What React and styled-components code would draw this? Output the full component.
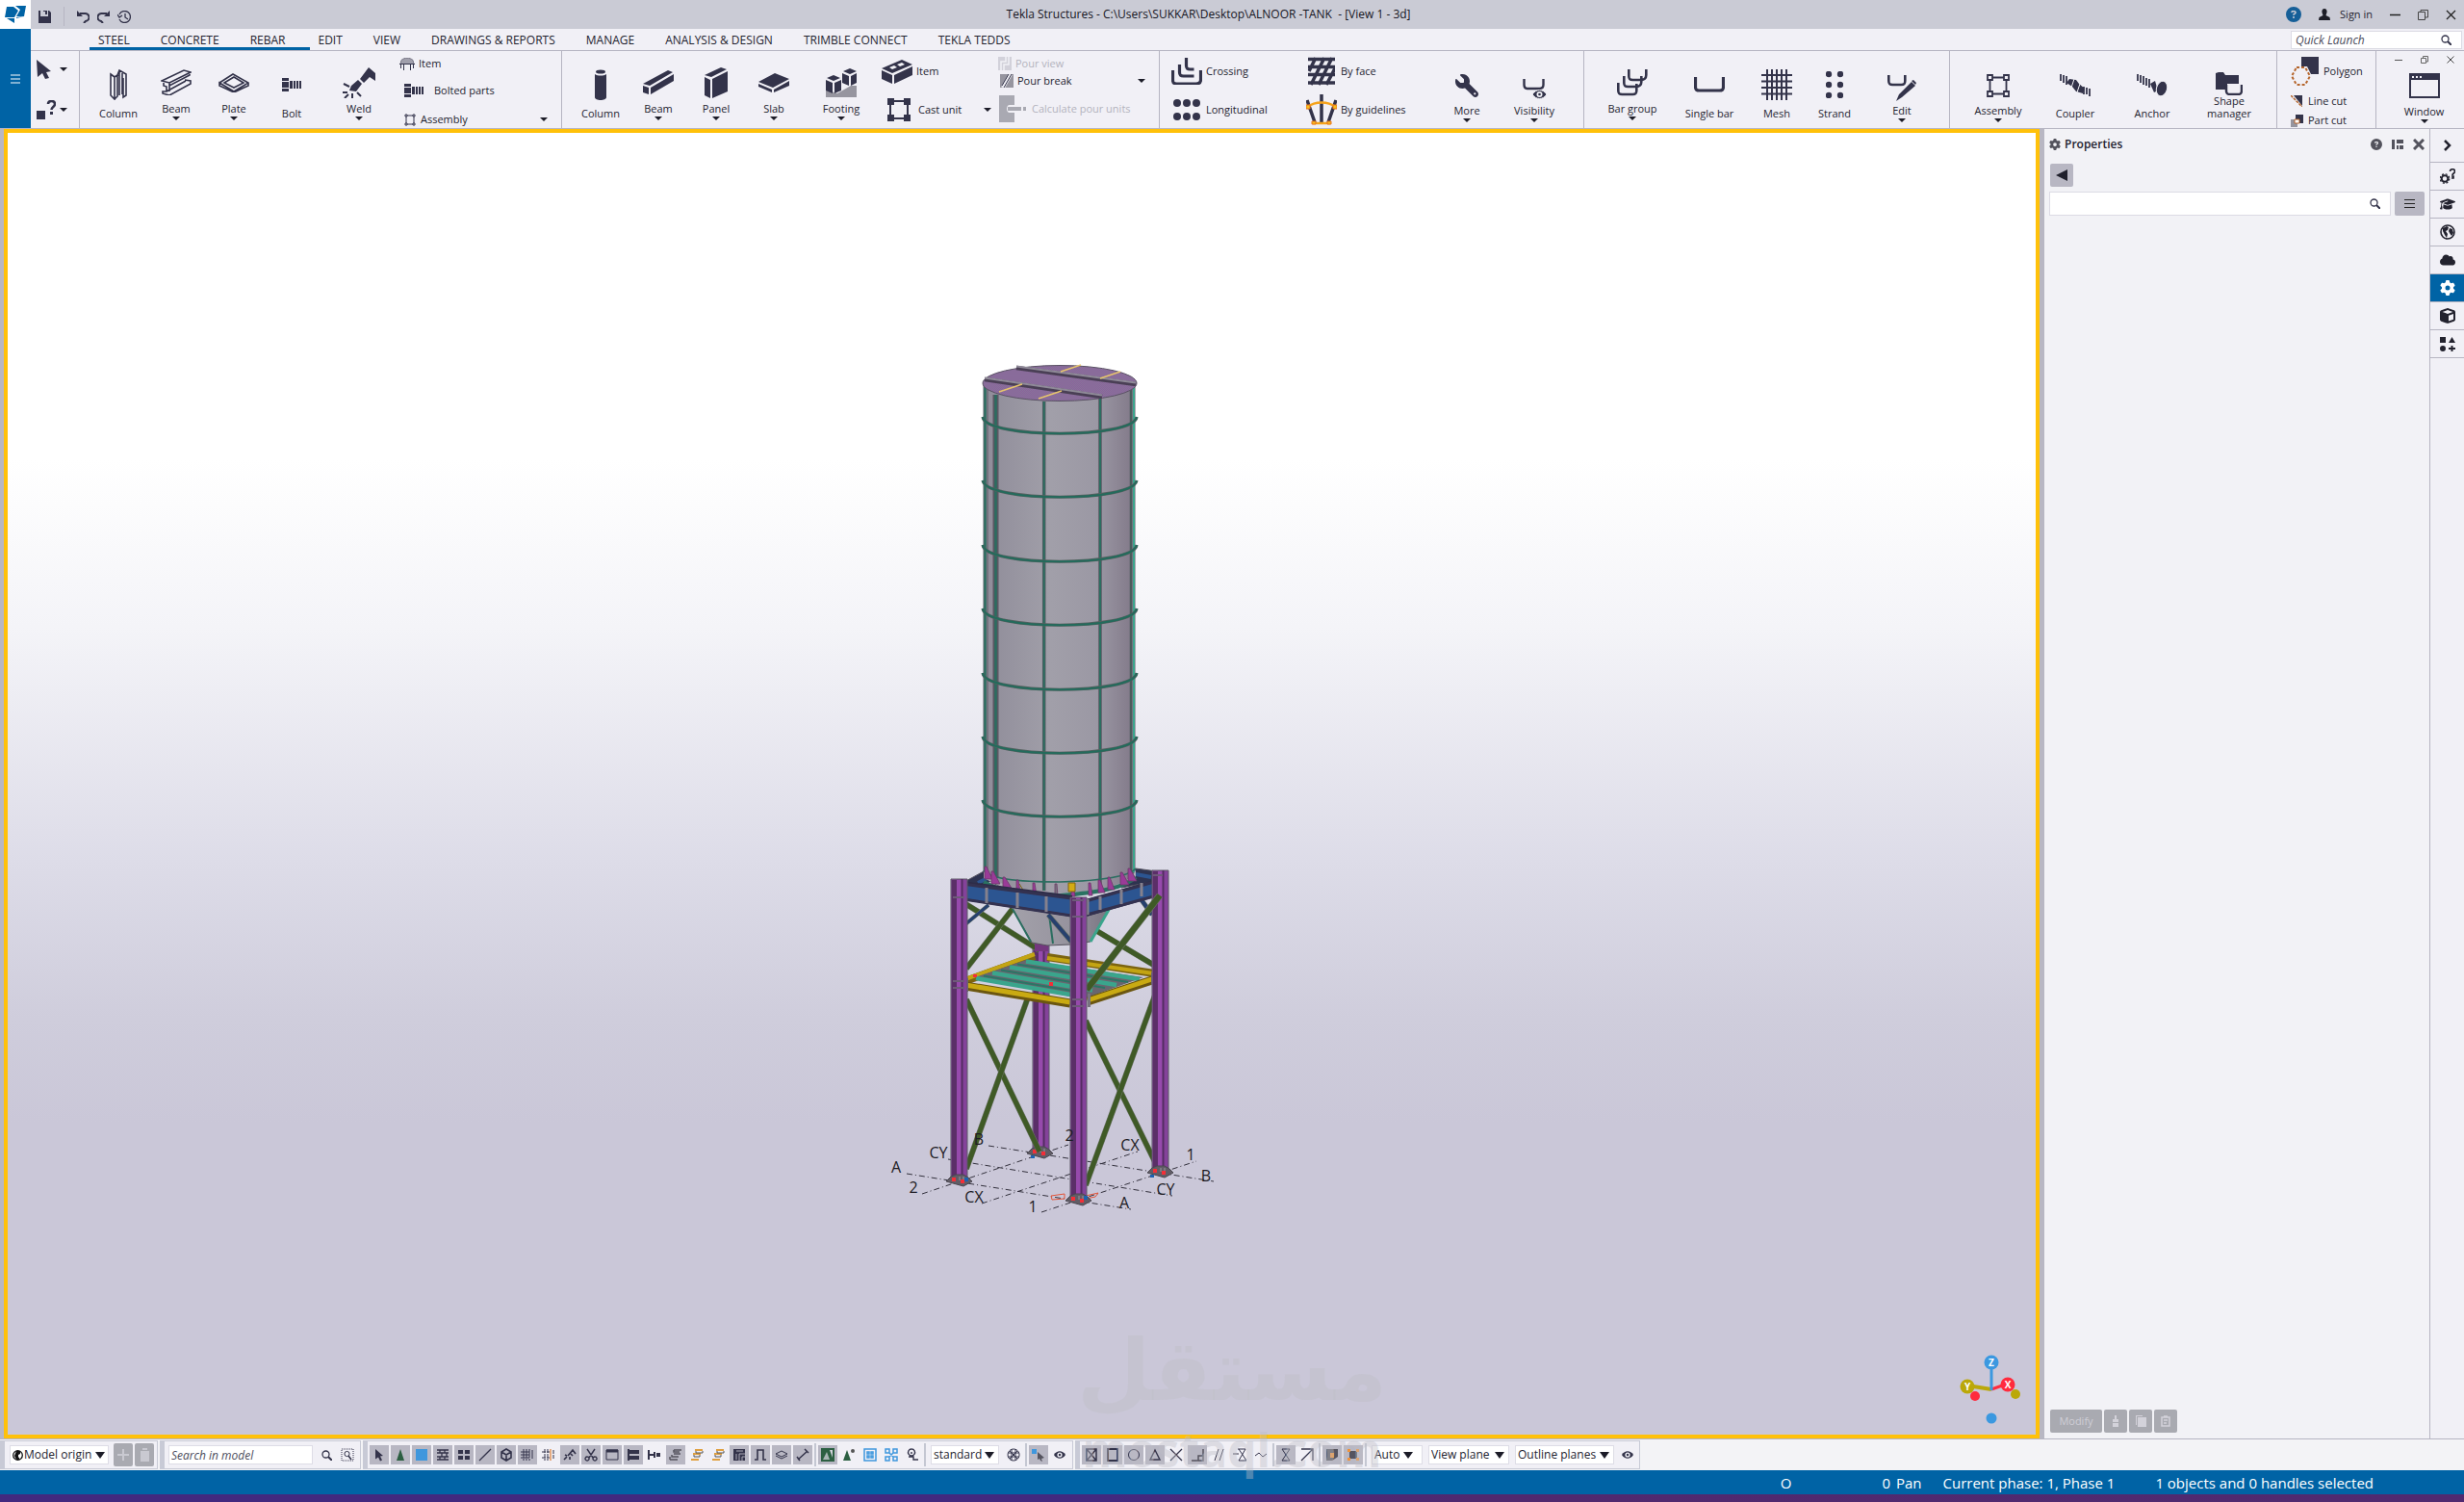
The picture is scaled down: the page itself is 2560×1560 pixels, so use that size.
import React from "react";
import styled, { createGlobalStyle } from "styled-components";
import { FaGear, FaGraduationCap, FaCloud, FaCube, FaCircleQuestion, FaWrench } from "react-icons/fa6";

const C = {
  ink: "#33334a",
  text: "#23232f",
  title: "#cacbd5",
  panel: "#f1f0f6",
  line: "#b6b5c2",
  blue: "#0063a5",
  yellow: "#ffc10a",
  pressed: "#b8b7c3",
  disabled: "#a9aab1",
};

const GlobalStyle = createGlobalStyle`
  *, *::before, *::after { box-sizing: border-box; }
  body { margin: 0; background: ${C.panel}; }
  body, button, input, select {
    font-family: "Open Sans", "Noto Sans", sans-serif;
    font-size: 11px;
    line-height: 14px;
    color: ${C.text};
  }
  button { border: 0; padding: 0; margin: 0; background: none; }
  svg { display: block; flex: none; }
`;

/* ---------- shell ---------- */
const Shell = styled.div`
  display: flex;
  flex-direction: column;
  height: 100vh;
  min-height: 600px;
  overflow: hidden;
  position: relative;
`;
const TitleBar = styled.header`
  display: flex;
  align-items: center;
  height: 30px;
  flex: none;
  background: ${C.title};
`;
const Logo = styled.div`
  width: 32px;
  height: 30px;
  background: #fff;
  display: flex;
  align-items: center;
  justify-content: center;
`;
const QuickTools = styled.div`
  display: flex;
  align-items: center;
  gap: 8px;
  padding-left: 8px;
  padding-top: 4px;
`;
const Divider = styled.span`
  width: 1px;
  height: 20px;
  background: ${C.line};
  margin: 0 5px;
`;
const Title = styled.h1`
  flex: 1;
  margin: 0;
  text-align: center;
  font-size: 12px;
  font-weight: 400;
  line-height: 32px;
  white-space: pre;
  color: #15151f;
`;
const WindowTools = styled.div`
  display: flex;
  align-items: center;
  padding-right: 8px;
  gap: 18px;
`;
const SignIn = styled.button`
  display: flex;
  align-items: center;
  gap: 10px;
`;
const IconButton = styled.button`
  display: flex;
  align-items: center;
  justify-content: center;
  color: ${(p) => p.$color || C.ink};
`;

const RibbonArea = styled.div`
  display: flex;
  flex: none;
  border-bottom: 1px solid ${C.line};
`;
const MenuRail = styled.button`
  width: 32px;
  background: ${C.blue};
  display: flex;
  align-items: center;
  justify-content: center;
`;
const RibbonMain = styled.div`
  flex: 1;
  min-width: 0;
  background: ${C.panel};
`;
const TabRow = styled.nav`
  display: flex;
  height: 23px;
  border-bottom: 1px solid ${C.line};
  padding-left: 61px;
`;
const ActiveTabs = styled.div`
  display: flex;
  gap: 32px;
  padding: 0 26px 0 9px;
  margin-right: 8px;
  border-bottom: 3px solid ${C.blue};
`;
const OtherTabs = styled.div`
  display: flex;
  gap: 32px;
  flex: 1;
`;
const Tab = styled.button`
  height: 23px;
  font-size: 12px;
  line-height: 24px;
  white-space: nowrap;
`;
const QuickLaunch = styled.label`
  display: flex;
  align-items: center;
  width: 178px;
  height: 19px;
  margin: 2px 2px 0 0;
  padding: 0 10px 0 4px;
  background: #fff;
  border: 1px solid #dcdbe4;
`;
const BareInput = styled.input`
  flex: 1;
  min-width: 0;
  border: 0;
  padding: 0;
  background: none;
  outline: 0;
  font-size: 12px;
  font-style: italic;
  &::placeholder { color: #4c4c5c; opacity: 1; }
`;
const Ribbon = styled.div`
  display: flex;
  height: 80px;
`;
const Group = styled.section`
  display: flex;
  width: ${(p) => p.$w}px;
  flex: none;
  padding-left: ${(p) => p.$pad ?? 10}px;
  border-right: 1px solid ${C.line};
`;
const LastGroup = styled.section`
  flex: 1;
  display: flex;
  flex-direction: column;
  align-items: center;
  padding: 5px 0 0 8px;
`;
const MdiTools = styled.div`
  display: flex;
  gap: 19px;
  height: 8px;
`;
const CursorTools = styled.div`
  display: flex;
  flex-direction: column;
  justify-content: space-between;
  width: 100%;
  padding: 9px 0 9px;
`;
const CursorButton = styled.button`
  display: flex;
  align-items: center;
  gap: ${(p) => p.$gap}px;
`;
const BigButton = styled.button`
  display: flex;
  flex-direction: column;
  align-items: center;
  width: ${(p) => p.$w || 60}px;
  height: ${(p) => p.$h || 80}px;
  flex: none;
  padding: ${(p) => p.$top ?? 12}px 0 ${(p) => p.$bottom ?? 8}px;
  line-height: 13px;
`;
const Glyph = styled.span`
  flex: 1;
  min-height: 0;
  display: flex;
  align-items: center;
  justify-content: center;
`;
const Label = styled.span`
  text-align: center;
  padding-bottom: ${(p) => (p.$drop ? 2 : 0)}px;
`;
const Caret = styled.span`
  width: 0;
  height: 0;
  flex: none;
  border: 4px solid transparent;
  border-top-color: #1c1c28;
  border-bottom: 0;
`;
const Stack = styled.div`
  display: flex;
  flex-direction: column;
  width: ${(p) => p.$w}px;
  padding-top: ${(p) => p.$top || 0}px;
  flex: none;
`;
const StackItem = styled.button`
  display: flex;
  align-items: ${(p) => (p.$low ? "flex-end" : "center")};
  height: ${(p) => p.$h || 40}px;
  padding: 0 ${(p) => p.$end || 0}px ${(p) => (p.$low ? 2 : 0)}px ${(p) => p.$in || 0}px;
  gap: ${(p) => p.$gap || 4}px;
  flex: none;
  white-space: nowrap;
  color: ${(p) => (p.disabled ? "#b3b3bd" : C.text)};
  ${Caret} { margin-left: auto; margin-bottom: ${(p) => (p.$low ? 5 : 0)}px; }
`;

/* ---------- work area ---------- */
const Work = styled.main`
  display: flex;
  flex: 1;
  min-height: 0;
  border-bottom: 1px solid ${C.line};
`;
const ViewFrame = styled.section`
  flex: 1;
  min-width: 0;
  background: ${C.pressed};
  padding: 0 5px 0 4px;
  display: flex;
`;
const View = styled.div`
  flex: 1;
  border: 4px solid ${C.yellow};
  background: linear-gradient(#fff 25%, #f4f4f8 38%, #dddce8 56%, #cfcddc 68%, #cac7d8 76%);
  display: flex;
  align-items: center;
  justify-content: center;
  position: relative;
  overflow: hidden;
`;
const Compass = styled.svg`
  position: absolute;
  right: 15px;
  bottom: 10px;
`;
const Watermark = styled.div`
  position: absolute;
  left: 50%;
  bottom: 30px;
  transform: translateX(-50%);
  display: flex;
  flex-direction: column;
  align-items: center;
  gap: 6px;
  pointer-events: none;
  color: rgba(190, 190, 198, 0.42);
  font-weight: 700;
`;
const WatermarkArabic = styled.span`
  font-family: "DejaVu Sans", sans-serif;
  font-size: 88px;
  line-height: 104px;
`;
const WatermarkLatin = styled.span`
  font-size: 48px;
  line-height: 48px;
`;
const Panel = styled.aside`
  width: 401px;
  flex: none;
  display: flex;
  flex-direction: column;
  background: #f2f2f6;
  border-right: 1px solid ${C.line};
  padding: 0 5px 6px 5px;
`;
const PanelHead = styled.div`
  display: flex;
  align-items: center;
  gap: 10px;
  height: 31px;
`;
const PanelTitle = styled.h2`
  margin: 0 auto 0 -6px;
  font-size: 12px;
  font-weight: 600;
`;
const ToolButton = styled.button`
  display: flex;
  align-items: center;
  justify-content: center;
  width: ${(p) => p.$w || 24}px;
  height: ${(p) => p.$h || 24}px;
  margin: ${(p) => p.$m || "0"};
  border-radius: 2px;
  flex: none;
  background: ${(p) => (p.disabled ? C.disabled : C.pressed)};
  color: #cfced6;
`;
const SearchRow = styled.div`
  display: flex;
  gap: 4px;
  flex: 1;
`;
const SearchBox = styled.label`
  flex: 1;
  height: 25px;
  display: flex;
  align-items: center;
  padding: 0 10px;
  background: #fff;
  border: 1px solid #dcdbe4;
`;
const PanelActions = styled.div`
  display: flex;
  gap: 2px;
`;
const SideBar = styled.nav`
  width: 35px;
  flex: none;
  background: ${C.panel};
`;
const SideButton = styled.button`
  display: flex;
  align-items: center;
  justify-content: center;
  width: 100%;
  height: ${(p) => (p.$tall ? 35 : 29)}px;
  border-bottom: 1px solid ${C.line};
  background: ${(p) => (p.$on ? C.blue : "none")};
  color: ${(p) => (p.$on ? "#fff" : "#22222e")};
`;

/* ---------- bottom ---------- */
const BottomBar = styled.footer`
  display: flex;
  gap: 2px;
  height: 32px;
  padding: 1px 0;
  flex: none;
  background: #f3f3f6;
`;
const Dock = styled.div`
  display: flex;
  align-items: center;
  gap: 2px;
  height: 30px;
  padding: 0 ${(p) => p.$end ?? 2}px 0 ${(p) => p.$in ?? 2}px;
  background: ${C.panel};
  border: 1px solid #c8cad6;
  border-left-width: 5px;
`;
const Toggle = styled.button`
  width: 20px;
  height: 20px;
  display: flex;
  align-items: center;
  justify-content: center;
  background: ${(p) => (p.$on ? C.pressed : "none")};
`;
const Sep = styled.span`
  width: 2px;
  height: 24px;
  background: #c4c7d2;
`;
const Field = styled.label`
  display: grid;
  grid-template-columns: ${(p) => (p.$icon ? "12px" : "0")} 1fr 10px;
  align-items: center;
  width: ${(p) => p.$w}px;
  height: 20px;
  margin: 0 ${(p) => p.$mr ?? 3}px 0 ${(p) => p.$ml || 0}px;
  padding: 0 ${(p) => p.$pad || 4}px 0 2px;
  background: #fff;
  border: 1px solid #dedde6;
`;
const Select = styled.select`
  grid-column: 2 / 4;
  grid-row: 1;
  appearance: none;
  border: 0;
  padding: 0;
  background: none;
  font-size: 12px;
  white-space: nowrap;
`;
const FieldCaret = styled(Caret)`
  grid-column: 3;
  grid-row: 1;
  border-width: 7px 5px 0;
  pointer-events: none;
`;
const ModelSearch = styled.input`
  width: 150px;
  height: 20px;
  margin-right: 2px;
  padding: 0 2px;
  border: 1px solid #dedde6;
  background: #fff;
  font-size: 12px;
  font-style: italic;
  &::placeholder { color: #4c4c5c; opacity: 1; }
`;
const StatusBar = styled.div`
  display: flex;
  justify-content: flex-end;
  height: 25px;
  padding-right: 94px;
  flex: none;
  background: ${C.blue};
  color: #fff;
  font-size: 15px;
  line-height: 27px;
  white-space: nowrap;
`;
const Status = styled.span`
  margin-left: ${(p) => p.$gap || 0}px;
`;
const TaskStrip = styled.div`
  height: 8px;
  flex: none;
  background: linear-gradient(90deg, #42297f 45%, #50296f 60%, #502a70);
`;

/* ---------- icons ---------- */
const I = C.ink;
const ICONS = {
  logo: [22, 18, <g fill={C.blue}><path d="M2 1h7l5 4-4 7H0z" /><path d="M11 0h11l-2 11h-8l4-7z" /><path d="M2 13h8v5z" /><path d="M12 12l8-1-8 2z" /></g>],
  save: [13, 13, <path fill={I} d="M0 0h2v6h8V0h1l2 2v11H0zM5 0h4v4H7V1H5z" />],
  undo: [13, 13, <><path d="M3 3h5a4 4 0 0 1 1 8l-2 2" fill="none" stroke={I} strokeWidth="2" /><path d="M0 0v6h6z" fill={I} /></>],
  redo: [13, 13, <><path d="M10 3H5a4 4 0 0 0-1 8l2 2" fill="none" stroke={I} strokeWidth="2" /><path d="M13 0v6H7z" fill={I} /></>],
  history: [14, 13, <path d="M2 4a6 6 0 1 1 0 5M0 4l2 3 3-2M8 3v4l3 2" fill="none" stroke={I} strokeWidth="1.3" />],
  person: [12, 12, <path fill="#1d1d27" d="M6 0c2 0 3 2 2.500 4L7.500 7l4 2 .5 3H0l.5-3 4-2-1-3C3 2 4 0 6 0z" />],
  min: [11, 11, <path d="M0 5.500h11" stroke="#222" strokeWidth="1.500" />],
  restore: [11, 11, <path d="M.5 2.500h7v8h-7zM3 2V.5h7.500V8H8" fill="none" stroke="#444" />],
  close: [11, 11, <path d="M1 1l9 9M10 1l-9 9" stroke="#222" strokeWidth="1.300" />],
  min8: [8, 8, <path d="M0 4.500h8" stroke="#555" />],
  restore8: [8, 8, <path d="M.5 2.500h5v5h-5zM2.500 2V.5h5V6H6" fill="none" stroke="#666" />],
  close8: [8, 8, <path d="M.5.5l7 7M7.500.5l-7 7" stroke="#444" />],
  search: [11, 11, <><circle cx="4.500" cy="4.500" r="3.500" fill="none" stroke={I} strokeWidth="1.300" /><path d="M7 7l4 4" stroke={I} strokeWidth="2" /></>],
  menuW: [10, 10, <path d="M0 1h10M0 5h10M0 9h10" stroke="#fff" strokeWidth="1.200" />],
  menu: [11, 9, <path d="M0 .5h11M0 4.500h11M0 8.500h11" stroke="#222" />],
  cursor: [15, 20, <path fill={I} d="M0 0l15 12-5 1 3 6-4 1-3-6-5 4z" />],
  what: [20, 20, <><path fill={I} d="M0 11h9v9H0z" /><path d="M12 4c0-4 7-4 7 0 0 3-3.500 3-3.500 6" fill="none" stroke={I} strokeWidth="2.500" /><path fill={I} d="M14 12h3v3h-3z" /></>],
  scolumn: [18, 32, <path d="M1 5l4 3v23l-4-4zM5 8l3-2v22l-3 3M8 6l2-5 7 4v22l-3 2V9M10 1v26M13 4v22M5 8l4-2" fill="#f4f4f8" stroke={I} strokeWidth="1.600" />],
  sbeam: [32, 27, <path d="M1 12L24 1l7 2L9 14zM9 14v3l21-11V3M3 14v3l3 1v5l-4 0v2l7 2 22-12v-3l-6-1M6 23L26 12M9 17v6" fill="none" stroke={I} strokeWidth="1.600" />],
  splate: [32, 20, <path d="M1 10L15 1l16 9-15 9L1 10v3l15 7 15-7v-3M6 10l10-6 10 6-10 5z" fill="none" stroke={I} strokeWidth="1.600" />],
  bolt: [21, 14, <path fill={I} d="M0 0h7v3H0zM0 4h7v6H0zM0 11h7v3H0zM8 3h3v8H8zM12 3h2v8h-2zM15 3h2v8h-2zM18 3h2v8h-2z" />],
  weld: [34, 32, <><path fill={I} d="M18 12L27 0l7 6v8l-6-4-6 6zM16 13l4 4-6 8-7-1 2-5z" /><path d="M1 17l6 3M0 26h5M2 32l4-4M10 27v5M15 26l4 4" stroke={I} strokeWidth="2" /></>],
  sitem: [16, 13, <><path d="M2 2.500c3-3 9-3 12 0l1 4H1z" fill="#a09fac" stroke="#777685" /><path d="M1.500 6v5M4.500 7v6M11.500 7v6M14.500 6v5M0 6.500h16" stroke={I} /></>],
  frame: [24, 24, <path d="M1 1h5v5H1zM18 1h5v5h-5zM1 18h5v5H1zM18 18h5v5h-5zM6 3.500h12M6 20.500h12M3.500 6v12M20.500 6v12" fill="none" stroke={I} strokeWidth="1.800" />],
  frameS: [12, 13, <path d="M1 1h2v2H1zM9 1h2v2H9zM1 10h2v2H1zM9 10h2v2H9zM3 2h6M3 11h6M2 3v7M10 3v7" fill="none" stroke={I} />],
  frameF: [24, 24, <g fill={I}><path d="M0 0h7v7H0zM17 0h7v7h-7zM0 17h7v7H0zM17 17h7v7h-7z" /><path d="M3 3h18v18H3z" fill="none" stroke={I} strokeWidth="2" /></g>],
  ccolumn: [12, 32, <><path fill={I} d="M0 5v24c0 4 12 4 12 0V5c-3 2-9 2-12 0z" /><ellipse cx="6" cy="2.500" rx="5" ry="2" fill={I} /></>],
  cbeam: [32, 25, <path fill={I} d="M0 14L26 0l5 2L7 16zM0 16l6 2v7l-6-2zM8 18L32 4v7L8 25z" />],
  cpanel: [24, 32, <path fill={I} d="M0 8L17 0l6 2L7 10zM0 10l6 3v19l-6-3zM8 12L24 4v21L8 32z" />],
  cslab: [32, 20, <path fill={I} d="M0 9L17 0l15 6-17 9zM0 11l14 6v3L0 14zM16 17L32 8v5L16 20z" />],
  footing: [32, 30, <><path fill="#96959f" d="M0 22l12 4 14-8 6 0v12H0z" /><path fill={I} d="M18 3l7-3 7 3-7 3zM17 5l7 3v10l-7-3zM26 8l6-3v10l-6 3zM1 10l7-3 7 3-7 3zM0 12l7 3v11l-7-3zM9 15l7-3v11l-7 3z" /></>],
  citem: [32, 25, <><path fill={I} d="M0 9L21 0l11 5-21 9zM0 11l11 5v9L0 20zM13 16l19-9v9l-19 9z" /><path d="M8 8l5-2 3 2-5 2zM16 5l5-2 3 2-5 2z" fill="#f4f4f8" /></>],
  pview: [14, 14, <><path fill="#d2d1da" d="M0 0h14v14H0z" /><path d="M3 14V5h5V0M6 14V8h5V0" stroke="#f1f1f6" fill="none" strokeWidth="1.500" /></>],
  pbreak: [14, 14, <><path fill="#96959f" d="M0 0h14v14H0z" /><path d="M3 14L11 0" stroke="#f1f1f6" strokeWidth="4" /><path d="M4 14L12 0M2 12L9 0" stroke={I} /></>],
  pcalc: [28, 28, <path fill="#a9a9b2" fillRule="evenodd" d="M0 0h16v10h-5c-4 0-4 8 0 8h5v10H0zM9 12h14v4H9zM25 12h3v4h-3z" />],
  crossing: [32, 28, <path d="M1.500 13v10c0 3 1 4 4 4h20c3 0 5-1 5-4V13M8.500 7v8c0 3 1 4 4 4h11M15.500 0v8c0 3 1 4 4 4h4" fill="none" stroke={I} strokeWidth="3.200" />],
  dots6: [28, 22, <g fill={I}>{[4, 14, 24].map((x) => [4, 18].map((y) => <circle key={x + "-" + y} cx={x} cy={y} r="4" />))}</g>],
  dots6v: [18, 28, <g fill={I}>{[3, 15].map((x) => [3, 14, 25].map((y) => <circle key={x + "-" + y} cx={x} cy={y} r="3.200" />))}</g>],
  byface: [28, 30, <path d="M0 2.500h28M0 10.500h28M0 18.500h28M0 27h28M8 1L1 15M17 1L3 29M25 1L11 29M28 12L19 29" stroke={I} strokeWidth="3.500" fill="none" />],
  guide: [32, 32, <><path d="M16 0v29M1 6l8 23M31 6l-8 23" stroke={I} strokeWidth="3.500" /><path d="M2 13c7-6 21-6 28 0M7 30h18" fill="none" stroke="#f5a31c" strokeWidth="2.500" /><path fill="#f5c21c" stroke="#e8701c" d="M0 11h4v4H0zM28 11h4v4h-4zM6 28h4v3H6zM22 28h4v3h-4z" /></>],
  visib: [25, 22, <><path d="M1.500 0v6c0 3 1 4 3 4h13c3 0 4-1 4-4V0" fill="none" stroke={I} strokeWidth="2.400" /><path d="M10 16c4-6 11-6 15 0-4 6-11 6-15 0z" fill={I} stroke="#f1f1f6" /><circle cx="17.500" cy="16" r="3" fill="#f1f1f6" /><circle cx="17.500" cy="16" r="1.300" fill={I} /></>],
  bargroup: [32, 28, <path d="M1.300 14v8c0 3 1 4 4 4h11c3 0 4-1 4-4v-7M7.300 7v7c0 3 1 4 4 4h9c3 0 5-2 5-5V7M12.300 0v7c0 3 1 4 4 4h9c3 0 5-2 5-5V0" fill="none" stroke={I} strokeWidth="2.600" />],
  bar: [32, 16, <path d="M1.500 0v10c0 3 1 4 4 4h21c3 0 4-1 4-4V0" fill="none" stroke={I} strokeWidth="3.200" />],
  mesh: [32, 32, <path d="M0 6h32M0 12.500h32M0 19h32M0 25.500h32M6 0v32M11 0v32M16 0v32M21 0v32M26 0v32" stroke={I} strokeWidth="2" />],
  editbar: [30, 28, <><path d="M1.300 1v6c0 3 1 4 4 4h9c3 0 4-1 4-4V1" fill="none" stroke={I} strokeWidth="2.600" /><path fill={I} d="M25 8l4 4-14 12-6 4 3-7zM27 6l3 3-1 2-4-4z" /></>],
  coupler: [32, 23, <><path fill={I} d="M10 5l7 1 3 4 6 5-2 5-7-2-4-5-6-4z" /><path d="M1 0v7M4 1v8M7 2v9M25 13v8M28 14v7M31 15v8" stroke={I} strokeWidth="1.800" /><path d="M15 5l-3 9M21 10l-3 9" stroke="#f1f1f6" /></>],
  anchor: [32, 23, <><path d="M1 0v7M4 1v8M7 2v9M10 4v8M13 5v9" stroke={I} strokeWidth="1.800" /><path fill={I} d="M14 10l5-3 3 10-4 2z" /><ellipse cx="26" cy="15" rx="5.500" ry="8" transform="rotate(15 26 15)" fill={I} stroke="#f1f1f6" /></>],
  shape: [28, 24, <><path fill={I} d="M0 1l3-1h5l2 3h14v9H12v6H0z" /><path d="M11 13v6c0 3 1 4 4 4h8c3 0 4-1 4-4v-6" fill="none" stroke={I} strokeWidth="2.500" /></>],
  polygon: [29, 30, <><path fill={I} d="M11 0h18v18h-8l-4-8h-6z" /><path d="M6 11h9l5 9-5 9H6l-5-9z" fill="none" stroke="#b5652c" strokeWidth="2" strokeDasharray="3 2" /></>],
  linecut: [12, 12, <><path fill={I} d="M3 0h9v11z" /><path d="M0 0l12 12" stroke="#b5652c" strokeDasharray="3 1" strokeWidth="1.500" /></>],
  partcut: [13, 13, <><path fill="#96959f" d="M0 5h7v8H0z" /><path fill={I} d="M5 0h8v9H8V5H5z" /><path d="M4 5h5v4H4z" fill="#fff" stroke="#b5652c" /></>],
  window: [32, 26, <path fill={I} fillRule="evenodd" d="M0 0h32v26H0zM2 7v17h28V7zM3 3v2h2V3zM7 3v2h2V3zM11 3v2h2V3z" />],
  dock: [12, 12, <path fill="#53535d" d="M0 1h3v10H0zM5 1h7v4H5zM5 7h2v4H5zM8 7h4v4H8z" />],
  back: [12, 12, <path fill="#20202c" d="M0 6l12-6v12z" />],
  chevron: [8, 12, <path d="M1 1l5 5-5 5" fill="none" stroke="#20202c" strokeWidth="2.500" />],
  xbold: [12, 12, <path d="M1 1l10 10M11 1L1 11" stroke="#53535d" strokeWidth="3" />],
  gearq: [16, 16, <><circle cx="5" cy="10.500" r="3.300" fill="none" stroke="#22222e" strokeWidth="2" /><circle cx="5" cy="10.500" r="4.800" fill="none" stroke="#22222e" strokeWidth="1.200" strokeDasharray="2 1.800" /><path d="M10.500 3c0-3 5-3 5 0 0 2-2.500 2-2.500 4M12 8h2v2h-2" fill="none" stroke="#22222e" strokeWidth="1.700" /></>],
  world: [16, 16, <><circle cx="8" cy="8" r="7" fill="none" stroke="#22222e" strokeWidth="1.600" /><path fill="#22222e" d="M3 4l4-2 2 1-1 3-2 1 2 3-1 4-2-3-2-4zM10 4l3 1 1 4-2 3-2-3-1-2z" /></>],
  shapes: [16, 15, <path fill="#22222e" d="M0 0h6v6H0zM9 6l3.500-6L16 6zM6 12a3 3 0 1 1-6 0 3 3 0 0 1 6 0zM11.500 9h2v2H16v2h-2.500v2h-2v-2H9v-2h2.500z" />],
  brush: [8, 12, <path fill="#d3d2da" d="M3 0h2v4h2v3H1V4h2zM1 8h6v4H1z" />],
  copy: [11, 12, <path fill="#d3d2da" d="M0 0h7v1H1v9H0zM2 2h9v10H2z" />],
  paste: [10, 12, <path fill="none" stroke="#d3d2da" strokeWidth="1.500" d="M1 2h8v9H1zM3 1h4M3 5h4M3 8h3" />],
  globe: [11, 11, <><circle cx="5.500" cy="5.500" r="4.800" fill="#fff" stroke="#111" strokeWidth="1.300" /><path d="M4 1h4v3l-2 1v2l2 3H4L2 6z" fill="#111" /></>],
  plus: [14, 14, <path d="M7 1v12M1 7h12" stroke="#c9c9d1" strokeWidth="2" />],
  trash: [9, 14, <path d="M0 3h9v11H0zM2 0h5v2H2z" fill="#c9c9d1" />],
  find2: [14, 14, <><path d="M1 1h12v12H1z" fill="none" stroke={I} strokeDasharray="1 1" /><circle cx="6.500" cy="6" r="2.600" fill="none" stroke={I} /><path d="M8 8l3 4" stroke={I} strokeWidth="1.500" /></>],
};
const small = {
  cur: <path fill={I} d="M3 1l8 7-3 .5 2 4-2 1-2-4-3 2z" />,
  tri: <path fill="#2c5f42" d="M7 1l4 12H3z" />,
  sq: <path fill="#3f97dd" d="M1 1h12v12H1z" />,
  hash: <path d="M1 2h12M1 5h12M1 9h12M1 12h12M4 2v3M9 2v3M6 5v4M11 5v4M4 9v3M9 9v3" stroke={I} strokeWidth="1.300" />,
  dots: <path fill={I} d="M1 2h5v4H1zM8 2h5v4H8zM1 8h5v4H1zM8 8h5v4H8z" />,
  line: <path d="M1 13L13 1" stroke={I} strokeWidth="1.300" />,
  cube: <path d="M7 1l5 3v6l-5 3-5-3V4zM2 4l5 3 5-3M7 7v6" fill="none" stroke={I} strokeWidth="1.600" />,
  grid: <path d="M0 4h10M0 7h10M0 10h10M3 1v12M6 1v12M9 1v12M12 2v10" stroke={I} strokeDasharray="9 1" />,
  grid2: <><path d="M0 4h8M0 10h8M3 1v12M6 1v12M12 2v10" stroke={I} strokeDasharray="4 1" /><path d="M9 1v12" stroke="#e0955a" strokeWidth="1.500" /></>,
  weld: <path d="M1 12l3-3M5 8l5-6 3 4M2 7l2 1M7 12V9M8 6l2 2" stroke={I} strokeWidth="1.700" fill="none" />,
  cut: <path d="M3 1l6 9M11 1L5 10M3 9a2 2 0 1 0 .1 0M11 9a2 2 0 1 0 .1 0" fill="none" stroke={I} strokeWidth="1.400" />,
  win: <><path d="M1 2h12v10H1z" fill="none" stroke={I} /><path d="M1 3h12" stroke={I} strokeWidth="3" /></>,
  align: <path d="M2 1v12M3 3h9v2H3M3 9h9v2H3" stroke={I} strokeWidth="2" fill="none" />,
  pin: <path d="M1 2v10M1 7h6M7 4v6M10 5v4M12 5v4" stroke={I} strokeWidth="2" />,
  step: <path d="M5 2h8M5 6h7M1 12h8M5 2v2h6M3 7v2h7M1 9v3" stroke="#55545f" fill="none" strokeWidth="1.500" />,
  stepY: <><path d="M5 2h8M3 6h8M1 12h8" stroke="#e0a040" strokeWidth="2" /><path d="M6 3v2h7V3M4 7v2h6V7" stroke="#555" fill="none" /></>,
  blk: <><path fill={I} d="M1 1h12v12H1z" /><path d="M4 3h7M4 6v6M7 13V6h6M10 13V9h3" stroke="#aaa9b5" fill="none" /></>,
  pi: <path d="M1 12h3V2h6v10h3" fill="none" stroke={I} strokeWidth="1.600" />,
  layers: <path d="M1 6l6-3 6 3-6 3zM1 8l6 3 6-3" fill="none" stroke={I} />,
  dim: <path d="M2 12L12 3M1 9l3 4M9 1l4 4" fill="none" stroke={I} strokeWidth="1.500" />,
  photo: <><path fill="#2c5f42" d="M0 0h14v14H0z" /><path d="M2 12l4-8 3 8z" fill="#a8b5b5" /><path d="M9 2h3v8z" fill="#d3d3dc" /></>,
  tree: <><path fill="#2c5f42" d="M5 2l4 11H1z" /><circle cx="11" cy="3" r="2" fill="#555" /></>,
  snapA: <path d="M1 1h12v12H1zM4 4h2v2H4zM8 8h2v2H8zM8 4h2v2H8zM4 8h2v2H4z" fill="none" stroke="#3f97dd" strokeWidth="1.500" />,
  snapB: <path d="M1 1h4v4H1zM9 1h4v4H9zM1 9h4v4H1zM9 9h4v4H9zM5 5l4 4M9 5L5 9" fill="none" stroke="#3f97dd" strokeWidth="1.500" />,
  tape: <path d="M6 1a3.500 3.500 0 1 0 .1 0M6 4v2M3 9h5v3h5" fill="none" stroke={I} strokeWidth="1.400" />,
  web: <path d="M7 1a6 6 0 1 0 .1 0M3 3l8 8M11 3l-8 8M1 5h12M1 9h12M5 1v12M9 1v12" fill="none" stroke={I} />,
  sel: <><path fill="#3f97dd" d="M0 1h5v5H0z" /><path fill="#55545f" d="M6 4l7 6-3 1 1 3-2-1-1-2-2 1z" /></>,
  eye: <><path d="M1 7c3-5 9-5 12 0-3 5-9 5-12 0z" fill={I} /><circle cx="7" cy="7" r="2.600" fill="#f1f1f6" /><circle cx="7" cy="7" r="1.200" fill={I} /></>,
  bx: <path d="M2 1h10v12H2zM2 1l10 12M12 1L2 13" fill="none" stroke={I} strokeWidth="1.500" />,
  bsq: <path d="M2 1h10v12H2z" fill="none" stroke={I} strokeWidth="1.800" />,
  circ: <circle cx="7" cy="7" r="5.500" fill="none" stroke={I} />,
  tr: <path d="M7 2l5 10H2z" fill="none" stroke={I} strokeWidth="1.400" />,
  x: <path d="M1 1l12 12M13 1L1 13" stroke={I} strokeWidth="1.300" />,
  perp: <path d="M1 13h12V1M8 13V8h5" fill="none" stroke="#55545f" strokeWidth="1.500" />,
  par: <path d="M3 13L7 1M8 13l4-12" stroke={I} />,
  mid: <path d="M0 6h6M5 1h8l-7 12h8L6 1" fill="none" stroke={I} />,
  wave: <path d="M1 8l4-3 4 4 4-3" fill="none" stroke={I} />,
  hour: <path d="M3 1h8L3 13h8L3 1" fill="none" stroke={I} />,
  arrow: <path d="M1 13L12 2M1 1h12v12" fill="none" stroke={I} strokeWidth="1.300" />,
  so: <><path fill="#55545f" d="M1 1h12v8l-6 4H1z" /><path fill="#f0923a" d="M5 5h4v5H5z" /></>,
  sh: <><path fill="#55545f" d="M3 3h8v8H3z" /><path d="M1 1h3v3H1zM10 1h3v3h-3zM1 10h3v3H1zM10 10h3v3h-3z" fill="#f0923a" /></>,
};
const Icon = ({ n }) => {
  const [w, h, art] = ICONS[n];
  return <svg width={w} height={h} viewBox={`0 0 ${w} ${h}`} aria-hidden="true">{art}</svg>;
};
const SmallIcon = ({ n }) => <svg width="14" height="14" viewBox="0 0 14 14" aria-hidden="true">{small[n]}</svg>;

const Big = ({ icon, label, w, drop, top, bottom, children }) => (
  <BigButton $w={w} $top={top} $bottom={bottom ?? (drop ? 8 : 9)}>
    <Glyph>{children || <Icon n={icon} />}</Glyph>
    <Label $drop={drop}>{label}</Label>
    {drop && <Caret />}
  </BigButton>
);

const Tools = ({ items }) => items.map(([n, on], i) => <Toggle key={i} $on={on} aria-label={n}><SmallIcon n={n} /></Toggle>);

const Picker = ({ label, value, w, ml, mr, pad, icon }) => (
  <Field $w={w} $ml={ml} $mr={mr} $pad={pad} $icon={icon}>
    {icon ? <Icon n={icon} /> : <span />}
    <Select aria-label={label} defaultValue={value}><option>{value}</option></Select>
    <FieldCaret />
  </Field>
);

/* ---------- 3D model ---------- */
const rings = [433, 499, 566, 632, 699, 765, 831];
const Column = ({ x, top, bottom }) => (
  <g>
    <path d={`M${x} ${top}h17V${bottom}h-17z`} fill="#84429a" stroke="#5d5866" />
    <path d={`M${x + 1} ${top + 1}h5V${bottom}h-5z`} fill="#5b2f68" />
    <path d={`M${x + 6} ${top + 1}h5V${bottom}h-5z`} fill="#964aac" />
    <path d={`M${x + 11.5} ${top}V${bottom}`} stroke="#542c62" strokeWidth="2" />
  </g>
);
const Base = ({ x, y }) => (
  <g>
    <path d={`M${x - 13} ${y}l5-5 5-2h8l5 3 4 4-9 5z`} fill="#615d66" stroke="#4a4750" />
    <path d={`M${x + 1} ${y - 1}v-4M${x + 5} ${y}v-5`} stroke="#99959f" />
    <path d={`M${x - 7} ${y - 4}h4v4h-4zM${x + 2} ${y - 2}h4v4h-4z`} fill="#f22f38" />
  </g>
);
const Brace = ({ d, c = "#3f5a26", w = 5 }) => (
  <>
    <path d={d} stroke="#6c7466" strokeWidth={w + 1} fill="none" />
    <path d={d} stroke={c} strokeWidth={w} fill="none" />
  </>
);
const axisLabels = [["A", 931, 1212], ["CY", 975, 1197], ["B", 1017, 1183], ["2", 1111, 1179], ["CX", 1174, 1189], ["1", 1237, 1199], ["B", 1253, 1221], ["CY", 1211, 1235], ["A", 1168, 1249], ["1", 1073, 1253], ["CX", 1012, 1243], ["2", 949, 1233]];
const plates = [[1023, 900, 8], [1030, 905, 9], [1042, 911, 10], [1056, 914, 4], [1073, 917, 4], [1096, 918, 3], [1113, 918, 4], [1131, 917, 4], [1141, 914, 7], [1151, 911, 7], [1164, 906, 9], [1172, 902, 9]];
const Model = () => (
  <svg width="441" height="900" viewBox="841 364 441 900" role="img" aria-label="Silo tank on a steel support frame">
    <defs>
      <linearGradient id="shell"><stop offset="0" stopColor="#8f8c99" /><stop offset=".45" stopColor="#a19fa9" /><stop offset=".75" stopColor="#9b98a4" /><stop offset="1" stopColor="#817888" /></linearGradient>
      <linearGradient id="cone"><stop offset="0" stopColor="#a3a1aa" /><stop offset=".6" stopColor="#96939e" /><stop offset="1" stopColor="#787380" /></linearGradient>
      <pattern id="deck" width="2" height="2" patternUnits="userSpaceOnUse"><path d="M0 0h2v2H0z" fill="#85789a" /><path d="M0 0h1v1H0zM1 1h1v1H1z" fill="#8d5f9b" /></pattern>
    </defs>
    <g stroke="#33313d" strokeDasharray="6 3 1 3" fill="none">
      <path d="M942 1219l233 37M985 1204l233 38M1027 1190l234 37M958 1240l152-51M1020 1250l162-54M1082 1259l161-53" />
    </g>
    <path d="M1092 1242l14-2v5l-13 1zM1128 1242l13-3-3 4-10 2z" fill="none" stroke="#e2553a" />
    <Column x={1073} top={980} bottom={1196} />
    <Base x={1080} y={1198} />
    <Brace d="M1004 1038L1080 1196" />
    <Brace d="M1068 1036L1004 1214" />
    <Brace d="M1128 1060L1204 1215" />
    <Brace d="M1205 1020L1128 1231" />
    <path d="M1003 1019L1075 993M1088 994L1206 1012" stroke="#7c6410" strokeWidth="8" />
    <path d="M1003 1017L1075 991M1088 995L1205 1012" stroke="#c3a413" strokeWidth="4" />
    <path d="M1013 1015L1066 997 1188 1015 1130 1036 1112 1035z" fill="#68666f" />
    {[[1014, 1016, 1112, 1033], [1022, 1013.500, 1125, 1031], [1031, 1010.500, 1135, 1028.500], [1040, 1007.500, 1148, 1026], [1049, 1004.500, 1160, 1023], [1057, 1001.500, 1172, 1020], [1066, 998.500, 1184, 1017]].map(([a, b, c, d], i) => (
      <path key={a} d={`M${a} ${b}L${c} ${d}`} stroke={i % 2 ? "#2b7566" : "#3aa58c"} strokeWidth={i % 2 ? 2 : 4.500} />
    ))}
    <path d="M1003 1024L1112 1042M1130 1040L1206 1015" stroke="#6b5610" strokeWidth="9" />
    <path d="M1003 1023L1112 1041M1130 1039L1206 1014" stroke="#c9aa12" strokeWidth="5" />
    <path d="M1002 1016h4v14h-4zM1130 1032h3v14h-3zM1196 1010h3v13h-3z" fill="#77737f" />
    <path d="M1011 1012h4v3h-4zM1090 1020h4v4h-4z" fill="#f22f38" />
    <Brace d="M1002 938L1080 987" />
    <Brace d="M1052 944L1004 1006" />
    <Brace d="M1128 960L1205 1006" />
    <path d="M1075 980h14v8h-14z" fill="#74377f" />
    <path d="M1050 940L1072 979 1088 982 1112 981 1133 978 1154 942z" fill="url(#cone)" stroke="#55525d" />
    <path d="M1052 944L1071 978M1090 950L1094 980" stroke="#2b6e60" strokeWidth="2" />
    <path d="M1153 943L1133 978" stroke="#3aa58c" strokeWidth="3" />
    <Brace d="M1027 940L1003 960" c="#26406e" w={3} />
    <Brace d="M1089 950L1113 978" c="#26406e" w={4} />
    <Brace d="M1184 932L1197 950" c="#26406e" w={4} />
    <path d="M1000 917L1022 905 1030 915 1012 923zM1180 902L1202 905 1206 914 1165 922z" fill="#2e3350" stroke="#54525f" />
    <path d="M1016 917l10-5M1180 908l16 3" stroke="#2c5591" strokeWidth="4" />
    <path d="M1022 398V905Q1024 920 1060 925Q1101 930 1145 924Q1178 916 1179 902V398z" fill="url(#shell)" stroke="#5d5965" />
    <path d="M1034.500 410V912" stroke="#5a5762" strokeWidth="6" />
    <path d="M1034.500 410V912M1023.500 400V905" stroke="#2b6e60" strokeWidth="2.500" />
    <path d="M1026 403V906" stroke="#5a5762" />
    <path d="M1084.700 417V925M1143 414V922" stroke="#5a5762" strokeWidth="3.500" />
    <path d="M1084.700 417V925M1143 414V922" stroke="#2b6e60" strokeWidth="2" />
    <path d="M1175 405V912" stroke="#4b5c5c" strokeWidth="2.500" />
    <path d="M1178 400V906" stroke="#3aa58c" strokeWidth="2" />
    {rings.map((y) => (
      <g key={y} fill="none">
        <path d={`M1021 ${y}C1024 ${y + 23} 1178 ${y + 23} 1181 ${y}`} stroke="#55605f" strokeWidth="3.200" />
        <path d={`M1021 ${y}C1024 ${y + 23} 1178 ${y + 23} 1181 ${y}`} stroke="#236b5c" strokeWidth="2" />
      </g>
    ))}
    <ellipse cx="1101" cy="398" rx="80" ry="18.500" fill="url(#deck)" stroke="#5a5264" />
    <path d="M1056 382L1180 399M1023 394L1145 412" stroke="#4a3f55" strokeWidth="4.500" />
    <path d="M1056 380.500L1180 397.500M1023 392.500L1145 410.500" stroke="#8f8a98" strokeWidth="2" />
    <path d="M1102 386L1123 379M1143 393L1164 386M1038 407L1062 399M1079 414L1103 406" stroke="#e7c56c" strokeWidth="1.500" />
    <path d="M1022 903Q1024 915 1060 923Q1101 930 1145 923Q1176 916 1180 903L1180 912Q1160 925 1143 928L1101 932 1055 928 1022 912z" fill="#aeacb8" />
    <path d="M1022 904Q1030 916 1101 916Q1170 914 1180 902" fill="none" stroke="#2b6e60" strokeWidth="1.500" />
    <path d="M1022 916Q1042 928 1101 930Q1165 926 1180 911" fill="none" stroke="#2a7262" strokeWidth="4" />
    {plates.map(([x, y, w]) => (
      <path key={x} d={`M${x} ${y}h2l${w - 2} 13h${-w}z`} fill={w < 4 ? "#77737f" : "#9a3b98"} stroke="#6b3a66" strokeWidth=".8" />
    ))}
    <path d="M1110 917h7v9h-7zM1059 918l5 8" fill="#d4ab14" stroke="#7c6410" />
    <path d="M1000 916L1113 931V951L1001 934z" fill="#2c5591" stroke="#2e2c48" strokeWidth="2" />
    <path d="M1000 918L1113 933M1001 934L1113 951" stroke="#343250" strokeWidth="3" />
    <path d="M1128 935L1206 913V929L1129 951z" fill="#2c5591" stroke="#2e2c48" strokeWidth="2" />
    <path d="M1128 936L1206 914M1129 950L1206 929" stroke="#343250" strokeWidth="3" />
    <path d="M1000 915v16M1025 922v16M1057 927v16M1087 931v16M1130 934v16M1143 931v14M1165 924v15M1186 917v14M1199 912v14" stroke="#85818d" strokeWidth="3" />
    <Column x={1197} top={904} bottom={1215} />
    <Brace d="M1205 930L1129 1028" w={6} />
    <Column x={988} top={913} bottom={1225} />
    <Column x={1112} top={932} bottom={1245} />
    <path d="M990 932h12M990 1019h12M990 1026h12M1114 935h12M1114 952h12M1114 1038h12M1114 1045h12M1198 909h10" stroke="#6d5a78" strokeWidth="2" />
    <Base x={996} y={1227} />
    <Base x={1120} y={1247} />
    <Base x={1205} y={1218} />
    <path d="M1071 1200h4v3h-4zM1002 1223h4v4h-4zM1126 1242h4v4h-4zM1195 1220h4v3h-4z" fill="#1d62b0" />
    <g fontFamily="'Open Sans', sans-serif" fontSize="16" textAnchor="middle" fill="#1d1b24">
      {axisLabels.map(([t, x, y], i) => <text key={i} x={x} y={y + 6}>{t}</text>)}
    </g>
  </svg>
);

const firstTabs = ["STEEL", "CONCRETE", "REBAR"];
const moreTabs = ["EDIT", "VIEW", "DRAWINGS & REPORTS", "MANAGE", "ANALYSIS & DESIGN", "TRIMBLE CONNECT", "TEKLA TEDDS"];

export default function App() {
  return (
    <Shell>
      <GlobalStyle />
      <TitleBar>
        <Logo><Icon n="logo" /></Logo>
        <QuickTools>
          <IconButton aria-label="Save"><Icon n="save" /></IconButton>
          <Divider />
          <IconButton aria-label="Undo"><Icon n="undo" /></IconButton>
          <IconButton aria-label="Redo"><Icon n="redo" /></IconButton>
          <IconButton aria-label="History"><Icon n="history" /></IconButton>
        </QuickTools>
        <Title>{"Tekla Structures - C:\\Users\\SUKKAR\\Desktop\\ALNOOR -TANK  - [View 1 - 3d]"}</Title>
        <WindowTools>
          <IconButton aria-label="Help" $color="#165f98"><FaCircleQuestion size={16} /></IconButton>
          <SignIn><Icon n="person" />Sign in</SignIn>
          <IconButton aria-label="Minimize"><Icon n="min" /></IconButton>
          <IconButton aria-label="Restore"><Icon n="restore" /></IconButton>
          <IconButton aria-label="Close"><Icon n="close" /></IconButton>
        </WindowTools>
      </TitleBar>

      <RibbonArea>
        <MenuRail aria-label="Menu"><Icon n="menuW" /></MenuRail>
        <RibbonMain>
          <TabRow>
            <ActiveTabs>{firstTabs.map((t) => <Tab key={t}>{t}</Tab>)}</ActiveTabs>
            <OtherTabs>{moreTabs.map((t) => <Tab key={t}>{t}</Tab>)}</OtherTabs>
            <QuickLaunch><BareInput placeholder="Quick Launch" aria-label="Quick Launch" /><Icon n="search" /></QuickLaunch>
          </TabRow>
          <Ribbon>
            <Group $w={51} $pad={6}>
              <CursorTools>
                <CursorButton $gap={9} aria-label="Select"><Icon n="cursor" /><Caret /></CursorButton>
                <CursorButton $gap={4} aria-label="Inquire"><Icon n="what" /><Caret /></CursorButton>
              </CursorTools>
            </Group>
            <Group $w={501}>
              <Big icon="scolumn" label="Column" />
              <Big icon="sbeam" label="Beam" drop />
              <Big icon="splate" label="Plate" drop />
              <Big icon="bolt" label="Bolt" />
              <Big icon="weld" label="Weld" w={80} drop />
              <Stack $w={160}>
                <StackItem $h={26} $in={2}><Icon n="sitem" />Item</StackItem>
                <StackItem $h={30} $in={7} $gap={10}><Icon n="bolt" />Bolted parts</StackItem>
                <StackItem $h={24} $in={7} $gap={5} $end={4} $low><Icon n="frameS" />Assembly<Caret /></StackItem>
              </Stack>
            </Group>
            <Group $w={621}>
              <Big icon="ccolumn" label="Column" />
              <Big icon="cbeam" label="Beam" drop />
              <Big icon="cpanel" label="Panel" drop />
              <Big icon="cslab" label="Slab" drop />
              <Big icon="footing" label="Footing" w={80} drop />
              <Stack $w={122} $top={1}>
                <StackItem $in={2}><Icon n="citem" />Item</StackItem>
                <StackItem $in={8} $gap={8} $end={6}><Icon n="frameF" />Cast unit<Caret /></StackItem>
              </Stack>
              <Stack $w={156} $top={4}>
                <StackItem $h={18} $in={1} disabled><Icon n="pview" />Pour view</StackItem>
                <StackItem $h={18} $in={3} $end={2}><Icon n="pbreak" />Pour break<Caret /></StackItem>
                <StackItem $in={2} $gap={6} disabled><Icon n="pcalc" />Calculate pour units</StackItem>
              </Stack>
            </Group>
            <Group $w={441}>
              <Stack $w={140} $top={1}>
                <StackItem $in={2}><Icon n="crossing" />Crossing</StackItem>
                <StackItem $in={4} $gap={6}><Icon n="dots6" />Longitudinal</StackItem>
              </Stack>
              <Stack $w={134} $top={1}>
                <StackItem $in={4} $gap={6}><Icon n="byface" />By face</StackItem>
                <StackItem $in={2}><Icon n="guide" />By guidelines</StackItem>
              </Stack>
              <Big label="More" w={70} drop top={16} bottom={6}><FaWrench size={24} color={I} transform="scale(-1 1)" /></Big>
              <Big icon="visib" label="Visibility" w={70} drop top={24} bottom={6} />
            </Group>
            <Group $w={380}>
              <Big icon="bargroup" label="Bar group" w={80} drop />
              <Big icon="bar" label="Single bar" w={80} />
              <Big icon="mesh" label="Mesh" />
              <Big icon="dots6v" label="Strand" />
              <Big icon="editbar" label="Edit" w={80} drop top={20} bottom={6} />
            </Group>
            <Group $w={340}>
              <Big icon="frame" label="Assembly" w={80} drop top={16} bottom={6} />
              <Big icon="coupler" label="Coupler" w={80} />
              <Big icon="anchor" label="Anchor" w={80} />
              <Big icon="shape" label={<>Shape<br />manager</>} w={80} top={22} />
            </Group>
            <Group $w={103}>
              <Stack $w={90}>
                <StackItem $h={42} $in={4} $gap={5}><Icon n="polygon" />Polygon</StackItem>
                <StackItem $h={20} $in={4} $gap={6}><Icon n="linecut" />Line cut</StackItem>
                <StackItem $h={20} $in={4} $gap={5}><Icon n="partcut" />Part cut</StackItem>
              </Stack>
            </Group>
            <LastGroup>
              <MdiTools>
                <IconButton aria-label="Minimize view"><Icon n="min8" /></IconButton>
                <IconButton aria-label="Restore view"><Icon n="restore8" /></IconButton>
                <IconButton aria-label="Close view"><Icon n="close8" /></IconButton>
              </MdiTools>
              <BigButton $w={64} $h={66} $top={2} $bottom={4}>
                <Glyph><Icon n="window" /></Glyph>
                <Label $drop>Window</Label>
                <Caret />
              </BigButton>
            </LastGroup>
          </Ribbon>
        </RibbonMain>
      </RibbonArea>

      <Work>
        <ViewFrame>
          <View>
            <Model />
            <Compass width="66" height="75" viewBox="2034 1405 66 75" aria-label="View axes">
              <path d="M2069 1443l-25-4" stroke="#bba809" strokeWidth="4" />
              <path d="M2069 1443l17-6" stroke="#ff2b3d" strokeWidth="3" />
              <path d="M2069 1444v-28" stroke="#3b98e0" strokeWidth="3" />
              <circle cx="2094" cy="1448" r="5" fill="#bba809" />
              <circle cx="2052" cy="1450" r="5" fill="#ff2b3d" />
              <circle cx="2069" cy="1473" r="5.500" fill="#3b98e0" />
              <circle cx="2069" cy="1415" r="7.500" fill="#3b98e0" />
              <circle cx="2044" cy="1440" r="7.500" fill="#bba809" />
              <circle cx="2086" cy="1438" r="7.500" fill="#ff2b3d" />
              <g fill="#fff" fontFamily="'Open Sans', sans-serif" fontWeight="700" fontSize="10" textAnchor="middle">
                <text x="2069" y="1419">Z</text><text x="2044" y="1444">Y</text><text x="2086" y="1442">X</text>
              </g>
            </Compass>
          </View>
        </ViewFrame>
        <Panel>
          <PanelHead>
            <FaGear size={12} color="#53535d" />
            <PanelTitle>Properties</PanelTitle>
            <IconButton aria-label="Help" $color="#53535d"><FaCircleQuestion size={12} /></IconButton>
            <IconButton aria-label="Dock"><Icon n="dock" /></IconButton>
            <IconButton aria-label="Close panel"><Icon n="xbold" /></IconButton>
          </PanelHead>
          <ToolButton $m="5px 0 5px 1px" aria-label="Back"><Icon n="back" /></ToolButton>
          <SearchRow>
            <SearchBox><BareInput aria-label="Search properties" /><Icon n="search" /></SearchBox>
            <ToolButton $w={31} $h={25} aria-label="Options"><Icon n="menu" /></ToolButton>
          </SearchRow>
          <PanelActions>
            <ToolButton disabled $w={54} $m="0 0 0 1px">Modify</ToolButton>
            <ToolButton disabled aria-label="Clean"><Icon n="brush" /></ToolButton>
            <ToolButton disabled aria-label="Copy"><Icon n="copy" /></ToolButton>
            <ToolButton disabled aria-label="Paste"><Icon n="paste" /></ToolButton>
          </PanelActions>
        </Panel>
        <SideBar>
          <SideButton $tall aria-label="Collapse"><Icon n="chevron" /></SideButton>
          <SideButton aria-label="Instructor"><Icon n="gearq" /></SideButton>
          <SideButton aria-label="Learning"><FaGraduationCap size={16} /></SideButton>
          <SideButton aria-label="Online"><Icon n="world" /></SideButton>
          <SideButton aria-label="Warehouse"><FaCloud size={16} /></SideButton>
          <SideButton aria-label="Properties" $on><FaGear size={16} /></SideButton>
          <SideButton aria-label="Reference models"><FaCube size={16} /></SideButton>
          <SideButton aria-label="Components"><Icon n="shapes" /></SideButton>
        </SideBar>
      </Work>

      <BottomBar>
        <Dock $in={5} $end={3}>
          <Picker label="Model origin" value="Model origin" icon="globe" w={103} pad={3} />
          <ToolButton disabled $w={20} aria-label="Add"><Icon n="plus" /></ToolButton>
          <ToolButton disabled $w={20} aria-label="Delete"><Icon n="trash" /></ToolButton>
        </Dock>
        <Dock $in={4} $end={3}>
          <ModelSearch placeholder="Search in model" aria-label="Search in model" />
          <Toggle aria-label="Search"><Icon n="search" /></Toggle>
          <Toggle aria-label="Search area"><Icon n="find2" /></Toggle>
        </Dock>
        <Dock $end={3}>
          <Tools items={[["cur", 1], ["tri", 1], ["sq", 1], ["hash", 1], ["dots", 1], ["line", 1], ["cube", 1], ["grid", 1], ["grid2", 0], ["weld", 1], ["cut", 1], ["win", 1], ["align", 1], ["pin", 0], ["step", 1], ["stepY", 0], ["stepY", 0], ["blk", 1], ["pi", 1], ["layers", 1], ["dim", 1]]} />
          <Sep />
          <Tools items={[["photo", 1], ["tree", 0], ["snapA", 0], ["snapB", 0], ["tape", 0]]} />
          <Sep />
          <Picker label="Selection filter" value="standard" w={71} ml={3} />
          <Tools items={[["web", 0]]} />
          <Sep />
          <Tools items={[["sel", 1], ["eye", 0]]} />
        </Dock>
        <Dock>
          <Tools items={[["bx", 1], ["bsq", 1], ["circ", 1], ["tr", 1], ["x", 0], ["perp", 1], ["par", 0], ["mid", 0], ["wave", 0]]} />
          <Sep />
          <Tools items={[["hour", 1], ["arrow", 0]]} />
          <Sep />
          <Tools items={[["so", 1], ["sh", 1]]} />
          <Sep />
          <Picker label="Depth" value="Auto" w={53} ml={3} mr={4} pad={9} />
          <Picker label="Plane" value="View plane" w={84} mr={4} />
          <Picker label="Outline" value="Outline planes" w={103} mr={2} />
          <Tools items={[["eye", 0]]} />
        </Dock>
      </BottomBar>
      <StatusBar>
        <Status>O</Status>
        <Status $gap={94}>0</Status>
        <Status $gap={6}>Pan</Status>
        <Status $gap={22}>Current phase: 1, Phase 1</Status>
        <Status $gap={42}>1 objects and 0 handles selected</Status>
      </StatusBar>
      <TaskStrip />
      <Watermark aria-hidden="true">
        <WatermarkArabic>مستقل</WatermarkArabic>
        <WatermarkLatin>mostaql.com</WatermarkLatin>
      </Watermark>
    </Shell>
  );
}
